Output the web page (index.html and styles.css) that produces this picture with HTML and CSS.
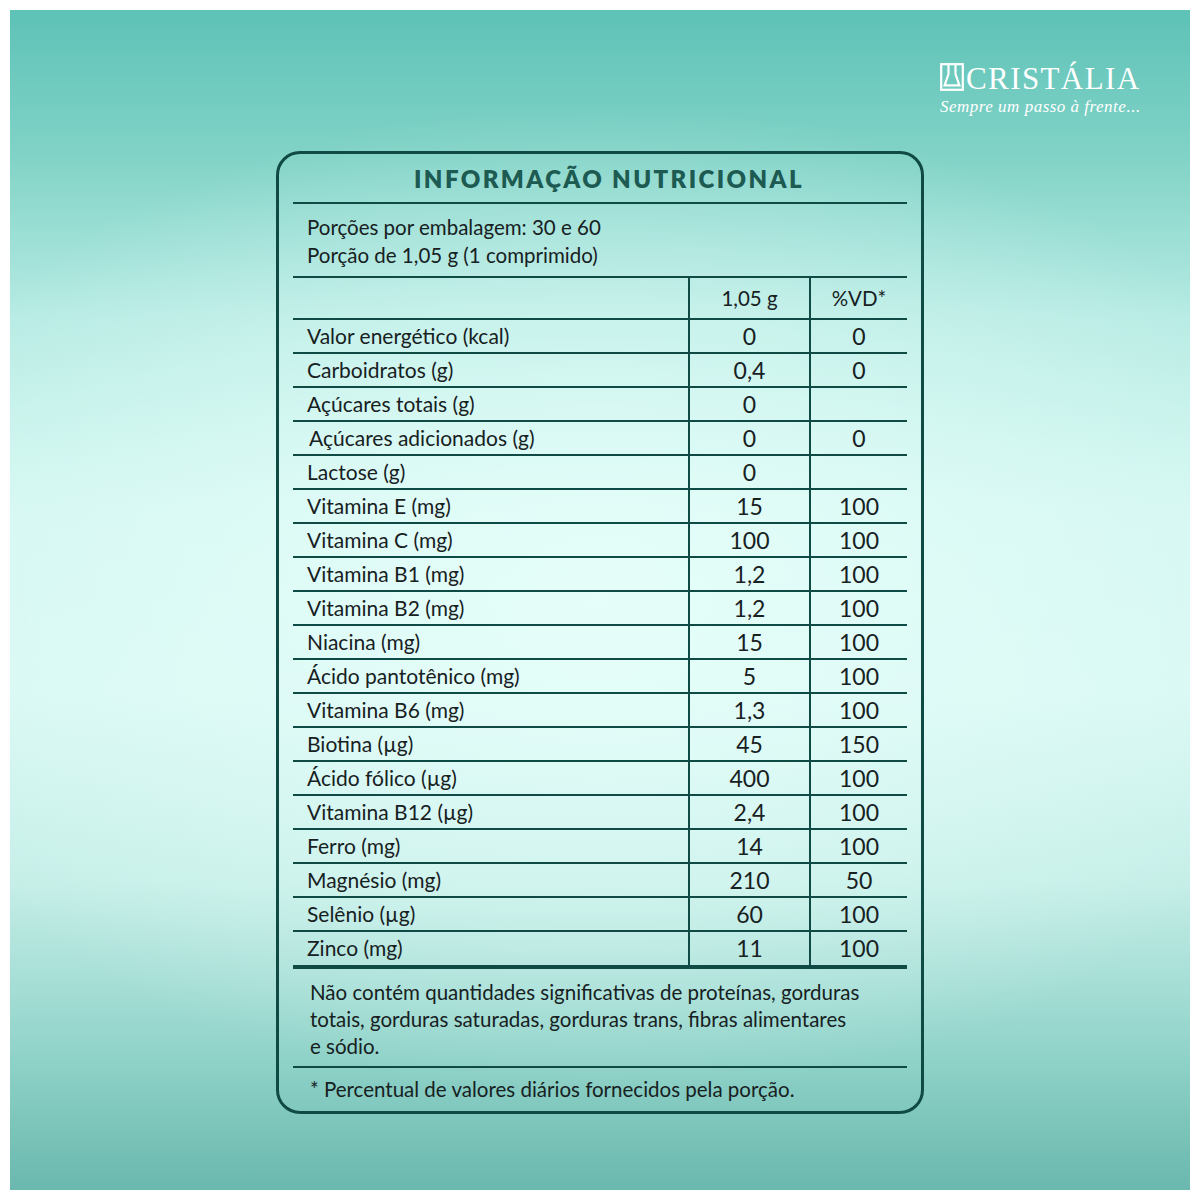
FILE: index.html
```html
<!DOCTYPE html>
<html lang="pt-BR">
<head>
<meta charset="utf-8">
<title>Informação Nutricional</title>
<link rel="stylesheet" href="styles.css">
</head>
<body>
<div class="frame">
  <div class="bg">
    <header class="brand">
      <div class="logo">
        <svg class="logo-icon" viewBox="0 0 24 28" width="24" height="28" aria-hidden="true">
          <rect x="1.2" y="1.2" width="21.6" height="25.6" fill="none" stroke="#fff" stroke-width="2.2"/>
          <path d="M8.5 1.2 V11 L4.6 22.3 H19.4 L15.5 11 V1.2" fill="none" stroke="#fff" stroke-width="2.2" stroke-linejoin="miter"/>
        </svg>
        <span class="logo-name">CRISTÁLIA</span>
      </div>
      <div class="tagline">Sempre um passo à frente...</div>
    </header>

    <section class="card">
      <h1 class="title">INFORMAÇÃO NUTRICIONAL</h1>
      <div class="portions">
        <div>Porções por embalagem: 30 e 60</div>
        <div>Porção de 1,05 g (1 comprimido)</div>
      </div>
      <div class="table">
        <div class="cell head"></div><div class="cell num head">1,05 g</div><div class="cell num head">%VD*</div>
        <div class="cell">Valor energético (kcal)</div><div class="cell num">0</div><div class="cell num">0</div>
        <div class="cell">Carboidratos (g)</div><div class="cell num">0,4</div><div class="cell num">0</div>
        <div class="cell">Açúcares totais (g)</div><div class="cell num">0</div><div class="cell num"></div>
        <div class="cell sub">Açúcares adicionados (g)</div><div class="cell num">0</div><div class="cell num">0</div>
        <div class="cell">Lactose (g)</div><div class="cell num">0</div><div class="cell num"></div>
        <div class="cell">Vitamina E (mg)</div><div class="cell num">15</div><div class="cell num">100</div>
        <div class="cell">Vitamina C (mg)</div><div class="cell num">100</div><div class="cell num">100</div>
        <div class="cell">Vitamina B1 (mg)</div><div class="cell num">1,2</div><div class="cell num">100</div>
        <div class="cell">Vitamina B2 (mg)</div><div class="cell num">1,2</div><div class="cell num">100</div>
        <div class="cell">Niacina (mg)</div><div class="cell num">15</div><div class="cell num">100</div>
        <div class="cell">Ácido pantotênico (mg)</div><div class="cell num">5</div><div class="cell num">100</div>
        <div class="cell">Vitamina B6 (mg)</div><div class="cell num">1,3</div><div class="cell num">100</div>
        <div class="cell">Biotina (µg)</div><div class="cell num">45</div><div class="cell num">150</div>
        <div class="cell">Ácido fólico (µg)</div><div class="cell num">400</div><div class="cell num">100</div>
        <div class="cell">Vitamina B12 (µg)</div><div class="cell num">2,4</div><div class="cell num">100</div>
        <div class="cell">Ferro (mg)</div><div class="cell num">14</div><div class="cell num">100</div>
        <div class="cell">Magnésio (mg)</div><div class="cell num">210</div><div class="cell num">50</div>
        <div class="cell">Selênio (µg)</div><div class="cell num">60</div><div class="cell num">100</div>
        <div class="cell last">Zinco (mg)</div><div class="cell num last">11</div><div class="cell num last">100</div>
      </div>
      <p class="note">Não contém quantidades significativas de proteínas, gorduras<br>totais, gorduras saturadas, gorduras trans, fibras alimentares<br>e sódio.</p>
      <p class="footnote">* Percentual de valores diários fornecidos pela porção.</p>
    </section>
  </div>
</div>
</body>
</html>
```

FILE: styles.css
```css
* { box-sizing: border-box; }

html, body {
  margin: 0;
  padding: 0;
  background: #ffffff;
}

.frame {
  width: 1200px;
  height: 1200px;
  padding: 10px;
  background: #ffffff;
}

.bg {
  width: 1180px;
  height: 1180px;
  display: flex;
  flex-direction: column;
  background:
    radial-gradient(ellipse 65% 42% at 50% 50%, rgba(232, 255, 251, 0.85), rgba(232, 255, 251, 0) 100%),
    linear-gradient(180deg, #5ec2b7 0%, #80d2c6 12%, #b6ebe3 26%, #d3f7f1 42%, #d8f8f3 58%, #c4eee7 74%, #92d4ca 88%, #6ab8ae 100%);
  font-family: "Lato", "Open Sans", sans-serif;
  color: #17211f;
}

.brand {
  align-self: flex-end;
  margin: 52px 50px 0 0;
  width: 200px;
  display: flex;
  flex-direction: column;
  color: #ffffff;
}

.logo {
  display: flex;
  align-items: center;
  gap: 2px;
  height: 30px;
}

.logo-icon {
  display: block;
  flex: none;
}

.logo-name {
  font-family: "Liberation Serif", "Times New Roman", serif;
  font-size: 31px;
  line-height: 30px;
  letter-spacing: 1.4px;
  padding-top: 4px;
}

.tagline {
  font-family: "Liberation Serif", serif;
  font-style: italic;
  font-size: 17px;
  line-height: 20px;
  margin-top: 5px;
  letter-spacing: 0.5px;
  white-space: nowrap;
}

.card {
  margin: 34px 0 0 266px;
  width: 648px;
  border: 3px solid #0f4a44;
  border-radius: 24px;
  padding: 0 14px 8px 14px;
}

.title {
  margin: 0;
  height: 50px;
  line-height: 49px;
  padding-left: 18px;
  text-align: center;
  font-size: 24px;
  font-weight: 800;
  letter-spacing: 2.4px;
  color: #1c5a52;
  border-bottom: 2px solid #0f4a44;
}

.portions {
  padding: 9px 0 7px 14px;
  font-size: 20.5px;
  line-height: 28px;
  border-bottom: 2px solid #0f4a44;
}

.table {
  display: grid;
  grid-template-columns: 395px 121px 98px;
}

.cell {
  height: 34px;
  line-height: 32px;
  padding-left: 14px;
  font-size: 21px;
  border-bottom: 2px solid #0f4a44;
  white-space: nowrap;
}

.cell.sub {
  padding-left: 16px;
}

.cell.head {
  height: 42px;
  line-height: 40px;
}

.cell.num {
  padding-left: 0;
  text-align: center;
  font-size: 23px;
  border-left: 2px solid #0f4a44;
}

.cell.num.head {
  font-size: 20.5px;
}

.cell.last {
  height: 37px;
  border-bottom: 4px solid #0f4a44;
}

.note {
  margin: 0;
  padding: 10px 0 6px 17px;
  font-size: 20.5px;
  line-height: 27px;
  border-bottom: 2px solid #0f4a44;
  white-space: nowrap;
}

.footnote {
  margin: 0;
  padding: 8px 0 0 17px;
  font-size: 20.5px;
  line-height: 27px;
}
```
